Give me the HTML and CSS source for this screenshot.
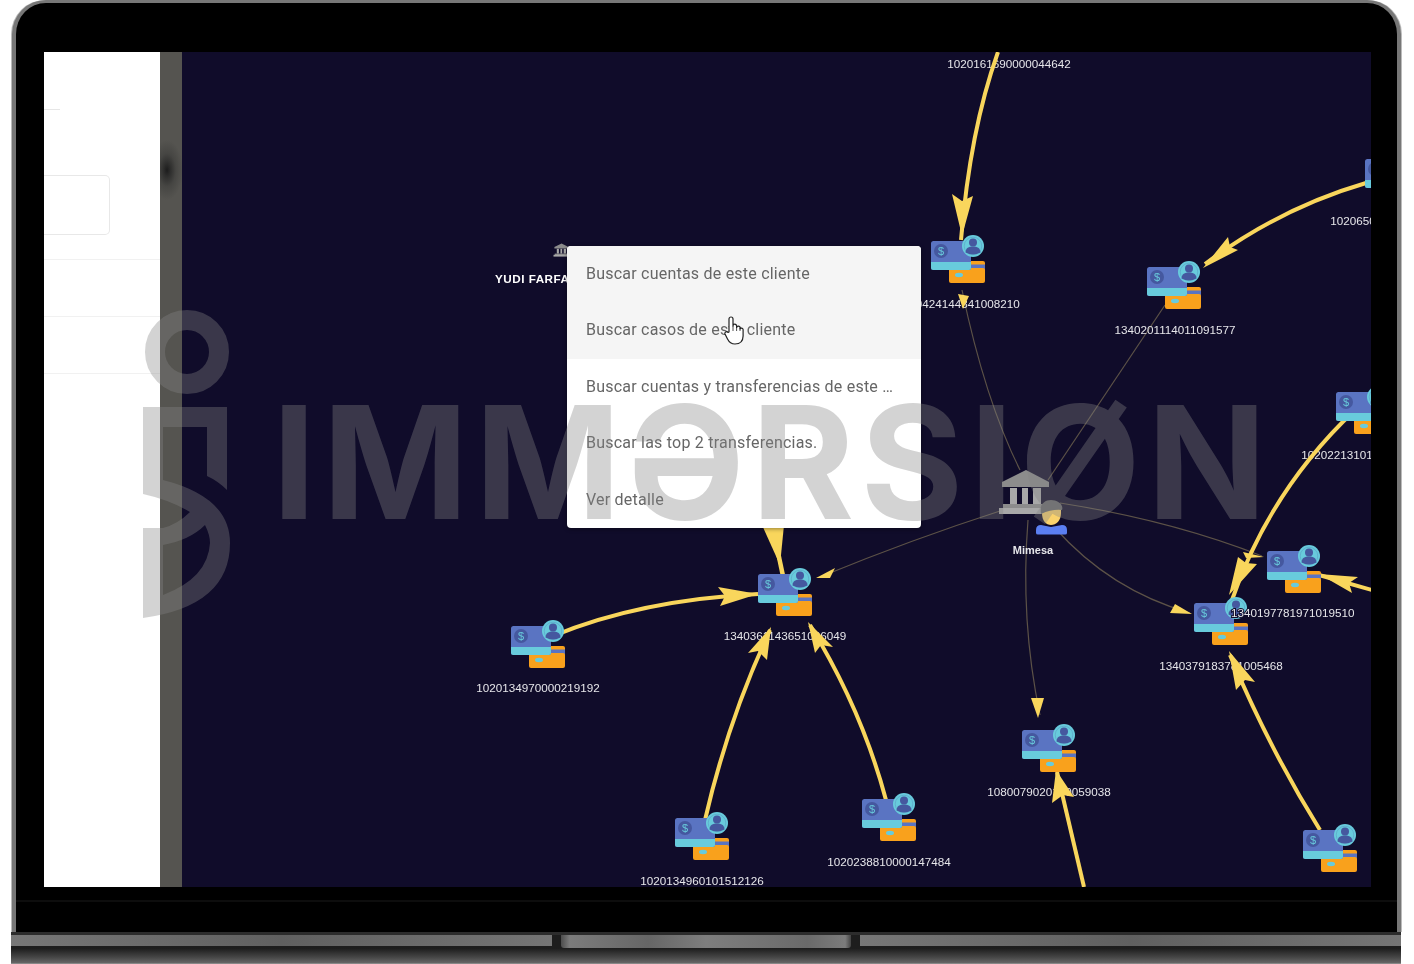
FILE: index.html
```html
<!DOCTYPE html>
<html lang="es">
<head>
<meta charset="utf-8">
<title>Immersion</title>
<link rel="stylesheet" href="styles.css">
</head>
<body>
<div class="page">
  <div class="lid">
    <div class="screen">
      <aside class="panel">
        <div class="rule-short"></div>
        <div class="field"></div>
        <div class="row-line first"></div>
        <div class="row-line"></div>
        <div class="row-line"></div>
      </aside>
      <div class="strip"></div>
      <main class="canvas">
        <svg class="graph" viewBox="182 52 1189 835" width="1189" height="835">
          <defs>
            <g id="acct">
              <rect x="37" y="20" width="17" height="12" rx="2" class="orange"/>
              <rect x="37" y="23.5" width="17" height="6" class="blue"/>
              <rect x="18" y="27" width="36" height="15" rx="2" class="orange"/>
              <ellipse cx="28" cy="34" rx="4" ry="2.2" class="cyan"/>
              <rect x="0" y="0" width="40" height="29" rx="2.5" class="blue"/>
              <path d="M0 21H40V26.5a2.5 2.5 0 0 1-2.5 2.5H2.5A2.5 2.5 0 0 1 0 26.5Z" class="cyan"/>
              <circle cx="10" cy="10" r="7" class="deep"/>
              <text x="10" y="14" class="dollar">$</text>
              <circle cx="42" cy="5" r="11" class="cyan"/>
              <circle cx="42" cy="5" r="8.8" class="ring"/>
              <circle cx="42" cy="1.5" r="4" class="deep"/>
              <path d="M34.5 11.5C34.5 7 38 5.5 42 5.5S49.500 7 49.500 11.500Q42 15.500 34.500 11.500Z" class="deep"/>
            </g>
            <g id="bank">
              <path d="M2-22 25-10V-5H-22V-10Z" class="stone"/>
              <rect x="-14" y="-4" width="7" height="16" class="stone-light"/>
              <rect x="-2" y="-4" width="6" height="16" class="stone-light"/>
              <rect x="9" y="-4" width="8" height="16" class="stone-light"/>
              <rect x="-21" y="12" width="42" height="5" class="stone"/>
              <rect x="-25" y="16" width="47" height="6" class="stone-light"/>
            </g>
          </defs>

          <path class="thin" d="M1020 470Q985 400 962 290"/>
          <path class="thin" d="M1048 480 1165 305"/>
          <path class="thin" d="M1003 510Q910 540 820 577"/>
          <path class="thin" d="M1055 528Q1110 590 1190 613"/>
          <path class="thin" d="M1060 503Q1170 520 1262 556"/>
          <path class="thin" d="M1028 520Q1020 620 1040 715"/>

          <text x="1009" y="68" class="label">1020161690000044642</text>
          <text x="958" y="308" class="label">1340424144341008210</text>
          <text x="1175" y="334" class="label">1340201114011091577</text>
          <text x="1392" y="225" class="label">1020650000000123456</text>
          <text x="1363" y="459" class="label">1020221310100000123</text>
          <text x="785" y="640" class="label">1340361143651026049</text>
          <text x="1221" y="670" class="label">1340379183781005468</text>
          <text x="1049" y="796" class="label">1080079020100059038</text>
          <text x="538" y="692" class="label">1020134970000219192</text>
          <text x="889" y="866" class="label">1020238810000147484</text>
          <text x="702" y="885" class="label">1020134960101512126</text>
          <text x="495" y="283" class="label-bold">YUDI FARFAN</text>
          <text x="1033" y="554" class="label-name">Mimesa</text>

          <path class="edge" d="M998 52Q970 130 961 240"/>
          <polygon class="head" points="962,236 952,194 962,201 973,196"/>
          <path class="edge" d="M1366 183Q1280 208 1205 264"/>
          <polygon class="head" points="1203,268 1228,237 1230,247 1238,250"/>
          <path class="edge" d="M553 636Q640 600 758 594"/>
          <polygon class="head" points="758,594 718,587 725,596 720,606"/>
          <path class="edge" d="M705 820Q728 720 770 630"/>
          <polygon class="head" points="771,627 748,653 758,651 767,660"/>
          <path class="edge" d="M886 800Q862 710 810 625"/>
          <polygon class="head" points="808,622 815,653 821,645 833,647"/>
          <path class="edge wide" d="M768 505 783 576"/>
          <polygon class="head" points="780,565 762,525 784,525"/>
          <path class="edge" d="M1355 410Q1270 490 1232 600"/>
          <polygon class="head" points="1229,595 1238,557 1246,563 1257,564"/>
          <path class="edge" d="M1372 590 1319 575"/>
          <polygon class="head" points="1319,574 1358,577 1349,583 1352,593"/>
          <path class="edge" d="M1320 830Q1270 750 1230 655"/>
          <polygon class="head" points="1229,651 1236,690 1245,680 1255,682"/>
          <path class="edge" d="M1084 887 1057 772"/>
          <polygon class="head" points="1056,770 1052,803 1063,795 1074,797"/>

          <polygon class="head" points="816,578 835,568 830,578"/>
          <polygon class="head" points="1192,614 1170,613 1175,604"/>
          <polygon class="head" points="1264,557 1243,552 1246,558"/>
          <polygon class="head" points="1038,718 1031,698 1044,698"/>
          <polygon class="head" points="963,309 958,294 969,296"/>

          <use href="#acct" x="931" y="241"/>
          <use href="#acct" x="1147" y="267"/>
          <use href="#acct" x="1365" y="159"/>
          <use href="#acct" x="1336" y="392"/>
          <use href="#acct" x="1267" y="551"/>
          <use href="#acct" x="1194" y="603"/>
          <use href="#acct" x="758" y="574"/>
          <use href="#acct" x="511" y="626"/>
          <use href="#acct" x="1022" y="730"/>
          <use href="#acct" x="862" y="799"/>
          <use href="#acct" x="675" y="818"/>
          <use href="#acct" x="1303" y="830"/>

          <use href="#bank" x="1024" y="492"/>
          <use href="#bank" transform="translate(561 250) scale(.3)"/>

          <path class="face" d="M1042 505H1061V513C1061 521 1056 525 1051 525S1042 521 1042 513Z"/>
          <path class="hair" d="M1041 514C1039 504 1045 500 1051 500S1064 504 1062 510Q1052 509 1041 514Z"/>
          <path class="shirt" d="M1036 533V530Q1036 525 1041 525L1051 527 1062 525Q1067 525 1067 530V533Q1067 534.500 1065 534.500H1038Q1036 534.500 1036 533Z"/>

          <text x="1231" y="617" class="label halo">1340197781971019510</text>
        </svg>
        <nav class="menu">
          <a class="item hot">Buscar cuentas de este cliente</a>
          <a class="item hot">Buscar casos de este cliente</a>
          <a class="item">Buscar cuentas y transferencias de este cliente</a>
          <a class="item">Buscar las top 2 transferencias.</a>
          <a class="item">Ver detalle</a>
        </nav>
      </main>
    </div>
    <div class="chin"></div>
  </div>
  <div class="base">
    <div class="hinge"></div>
    <div class="notch"></div>
    <div class="hinge"></div>
  </div>
  <div class="foot"></div>

  <svg class="cursor" width="20" height="30" viewBox="0 0 20 30">
    <path d="M5 17V4a2 2 0 0 1 4 0V11a1.800 1.800 0 0 1 3.600 0V12.500a1.800 1.800 0 0 1 3.500 .2V14a1.600 1.600 0 0 1 3 .6V21C19 26 16 29 11 29 7 29 5 27 3.500 24L1 19C.3 17 3 16 4 17.500Z"/>
    <path d="M9 11V16M12.600 12V16M16 13V16"/>
  </svg>

  <div class="watermark">
    <svg class="mark" viewBox="143 310 90 310" width="90" height="310">
      <circle cx="187" cy="352" r="32"/>
      <path fill-rule="evenodd" d="M143 407H227V490Q218 481 207 476V427H163V480Q230 497 230 543 230 606 143 618V528H163Q178 524 190 512 170 500 143 494ZM163 545Q190 540 205 525 210 535 210 543 208 578 163 595Z"/>
    </svg>
    <span class="wordmark">IMMƏRSIØN</span>
  </div>
</div>
</body>
</html>
```
FILE: styles.css
```css
* { box-sizing: border-box; }
html, body { margin: 0; padding: 0; background: #fff; }

.page {
  position: relative;
  width: 1414px;
  height: 964px;
  overflow: hidden;
  padding: 0 13px 0 11px;
  background: #fff;
}

.lid {
  height: 932px;
  margin-left: 1px;
  padding: 49px 26px 0 28px;
  background: #000;
  border: 4px solid #777;
  border-top-width: 3px;
  border-bottom: 0;
  border-radius: 34px 34px 0 0;
  box-shadow: -1px 0 0 #bbb, 1px 0 0 #bbb;
}

.screen {
  display: flex;
  height: 835px;
  overflow: hidden;
  filter: blur(.6px);
}

.panel {
  flex: 0 0 116px;
  padding-top: 57px;
  background: #fff;
}
.rule-short { width: 16px; height: 1px; background: #e6e6e6; }
.field {
  width: 66px;
  height: 60px;
  margin-top: 65px;
  border: 1px solid #e8e8e8;
  border-left: 0;
  border-radius: 0 5px 5px 0;
}
.row-line { height: 1px; margin-top: 56px; background: #f1f1f1; }
.row-line.first { margin-top: 24px; }

.strip {
  flex: 0 0 22px;
  background:
    radial-gradient(ellipse 16px 30px at 7px 118px, #1c1c1c 0, #2e2e2d 22%, rgba(60, 60, 58, .6) 55%, rgba(85, 84, 80, 0) 100%),
    #555450;
}

.canvas {
  position: relative;
  flex: 1;
  background: #100c2a;
}
.graph { display: block; }

.thin { fill: none; stroke: #5c5247; stroke-width: 1.2; }
.edge { fill: none; stroke: #f9d65c; stroke-width: 4; }
.edge.wide { stroke-width: 4.5; }
.head { fill: #f9d65c; }

.orange { fill: #f9a11c; }
.blue { fill: #5a74c2; }
.cyan { fill: #68cbdc; }
.deep { fill: #45589f; }
.ring { fill: #68cbdc; stroke: #5a9fc4; stroke-width: .6; }
.dollar {
  fill: #68cbdc;
  font: 11px "Liberation Sans", Arial, sans-serif;
  text-anchor: middle;
}

.stone { fill: #8c8c8c; }
.stone-light { fill: #a8a8a8; }
.hair { fill: #6a6a6c; }
.face { fill: #fad26c; }
.shirt { fill: #5b7ff2; }

.label, .label-bold, .label-name {
  fill: #e6e6ea;
  font-family: "Liberation Sans", Arial, sans-serif;
  font-size: 11.7px;
}
.label { text-anchor: middle; }
.label-bold { font-weight: 700; fill: #fff; letter-spacing: .5px; }
.label-name { text-anchor: middle; font-size: 11px; font-weight: 700; }
.halo { text-anchor: start; paint-order: stroke; stroke: #100c2a; stroke-width: 2px; }

.menu {
  position: absolute;
  left: 385px;
  top: 194px;
  display: flex;
  flex-direction: column;
  width: 354px;
  height: 282px;
  overflow: hidden;
  background: #fff;
  border-radius: 4px;
  box-shadow: 0 1px 4px rgba(0, 0, 0, .4);
}
.item {
  display: block;
  flex: 1;
  padding: 0 27px 0 19px;
  overflow: hidden;
  color: #666;
  font: 16px/55.4px Roboto, Arial, sans-serif;
  letter-spacing: .22px;
  white-space: nowrap;
  text-overflow: ellipsis;
}
.item.hot { background: #f5f5f5; }

.chin {
  height: 2px;
  margin: 13px -26px 0 -28px;
  background: #0d0d0d;
}

.base {
  display: flex;
  height: 16px;
  background: #1d1d1d;
  border-top: 3px solid #2c2c2c;
}
.hinge {
  flex: 1;
  height: 11px;
  background: linear-gradient(90deg, #777 0, #606060 50%, #757575 100%);
}
.notch {
  flex: 0 0 290px;
  margin: 0 9px;
  height: 13px;
  border-radius: 0 0 3px 3px;
  background: linear-gradient(90deg, #4d4d4d 0, #7c7c7c 3%, #666 30%, #7e7e7e 50%, #6a6a6a 85%, #7c7c7c 98%, #444 100%);
}
.foot {
  height: 16px;
  background: linear-gradient(180deg, #1b1b1b 0, #484848 60%, #666 94%, #aaa 100%);
}

.cursor {
  position: absolute;
  left: 724px;
  top: 315px;
}
.cursor path {
  fill: #fff;
  stroke: #222;
  stroke-width: 1.200;
  stroke-linejoin: round;
}
.cursor path + path { fill: none; stroke-width: .8; }

.watermark {
  position: absolute;
  left: 143px;
  top: 310px;
  pointer-events: none;
}
.mark {
  display: block;
  fill: rgba(132, 132, 132, .36);
  overflow: visible;
}
.mark circle {
  fill: none;
  stroke: rgba(132, 132, 132, .36);
  stroke-width: 20;
}
.wordmark {
  position: absolute;
  left: 129px;
  top: 74px;
  color: rgba(132, 132, 132, .36);
  font: 700 157px/1 Inter, "Noto Sans", sans-serif;
  letter-spacing: 6.2px;
  white-space: nowrap;
}
```
